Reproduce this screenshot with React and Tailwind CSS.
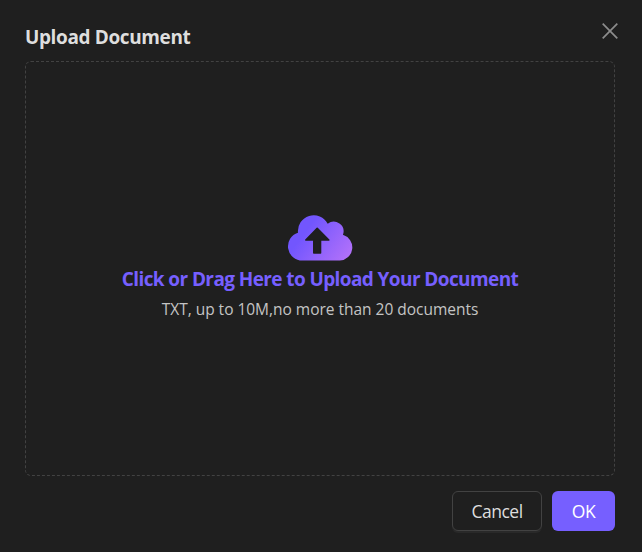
import React from "react";

function CloudUpload() {
  return (
    <svg className="shrink-0 overflow-visible" width="66" height="46" viewBox="0 0 66 46" aria-hidden="true">
      <defs>
        <linearGradient id="cloud" gradientUnits="userSpaceOnUse" x1="14" y1="8" x2="60" y2="42">
          <stop offset="0.15" stopColor="#7256fe" />
          <stop offset="1" stopColor="#b070fa" />
        </linearGradient>
      </defs>
      <path
        fill="url(#cloud)"
        d="M15.5 45.6A14.5 14.3 0 0 1 11 17.7A15.8 15.8 0 0 1 40.7 8.7A9.8 9.8 0 0 1 55.9 19.8A13.3 13.2 0 0 1 52.8 45.6Z"
      />
      <path
        fill="#1f1f1f"
        stroke="#1f1f1f"
        strokeWidth="1.6"
        strokeLinejoin="round"
        d="M30.2 13.4L41.8 25H33.5V38H26.8V25H18.8Z"
      />
    </svg>
  );
}

export default function App() {
  return (
    <div className="flex h-[552px] w-[642px] flex-col bg-[#1f1f1f] pt-[22px] pr-[27px] pl-[25px] font-['Open_Sans','Noto_Sans',sans-serif] text-[#dedede]">
      <header className="flex h-[39px] items-start justify-between">
        <h1 className="text-[19px] leading-[30px] font-bold tracking-[-0.38px] whitespace-nowrap">
          Upload Document
        </h1>
        <button aria-label="Close" className="-mr-[3px] pt-px">
          <svg width="16" height="16" viewBox="0 0 16 16" fill="none" stroke="#8c8c8c" strokeWidth="1.7">
            <path d="M.7.7L15.3 15.3M15.3.7L.7 15.3" />
          </svg>
        </button>
      </header>

      <main className="flex h-[415px] flex-col items-center rounded-[6px] border border-dashed border-[#424242] pt-[153px]">
        <CloudUpload />
        <p className="mt-1 text-[19px] leading-[28px] font-bold tracking-[-0.6px] whitespace-nowrap text-[#765fff]">
          Click or Drag Here to Upload Your Document
        </p>
        <p className="mt-1 text-[15.5px] leading-[24px] font-medium tracking-[-0.02px] whitespace-nowrap text-[#c4c4c4]">
          TXT, up to 10M,no more than 20 documents
        </p>
      </main>

      <footer className="mt-[15px] flex justify-end gap-[10px] text-[17.5px] tracking-[-0.5px]">
        <button className="h-10 w-[90px] rounded-[6px] border border-[#424242] pt-px shadow-[0_2px_0_#292929]">
          Cancel
        </button>
        <button className="h-10 w-[63px] rounded-[6px] bg-[#765fff] pt-px text-white">OK</button>
      </footer>
    </div>
  );
}
